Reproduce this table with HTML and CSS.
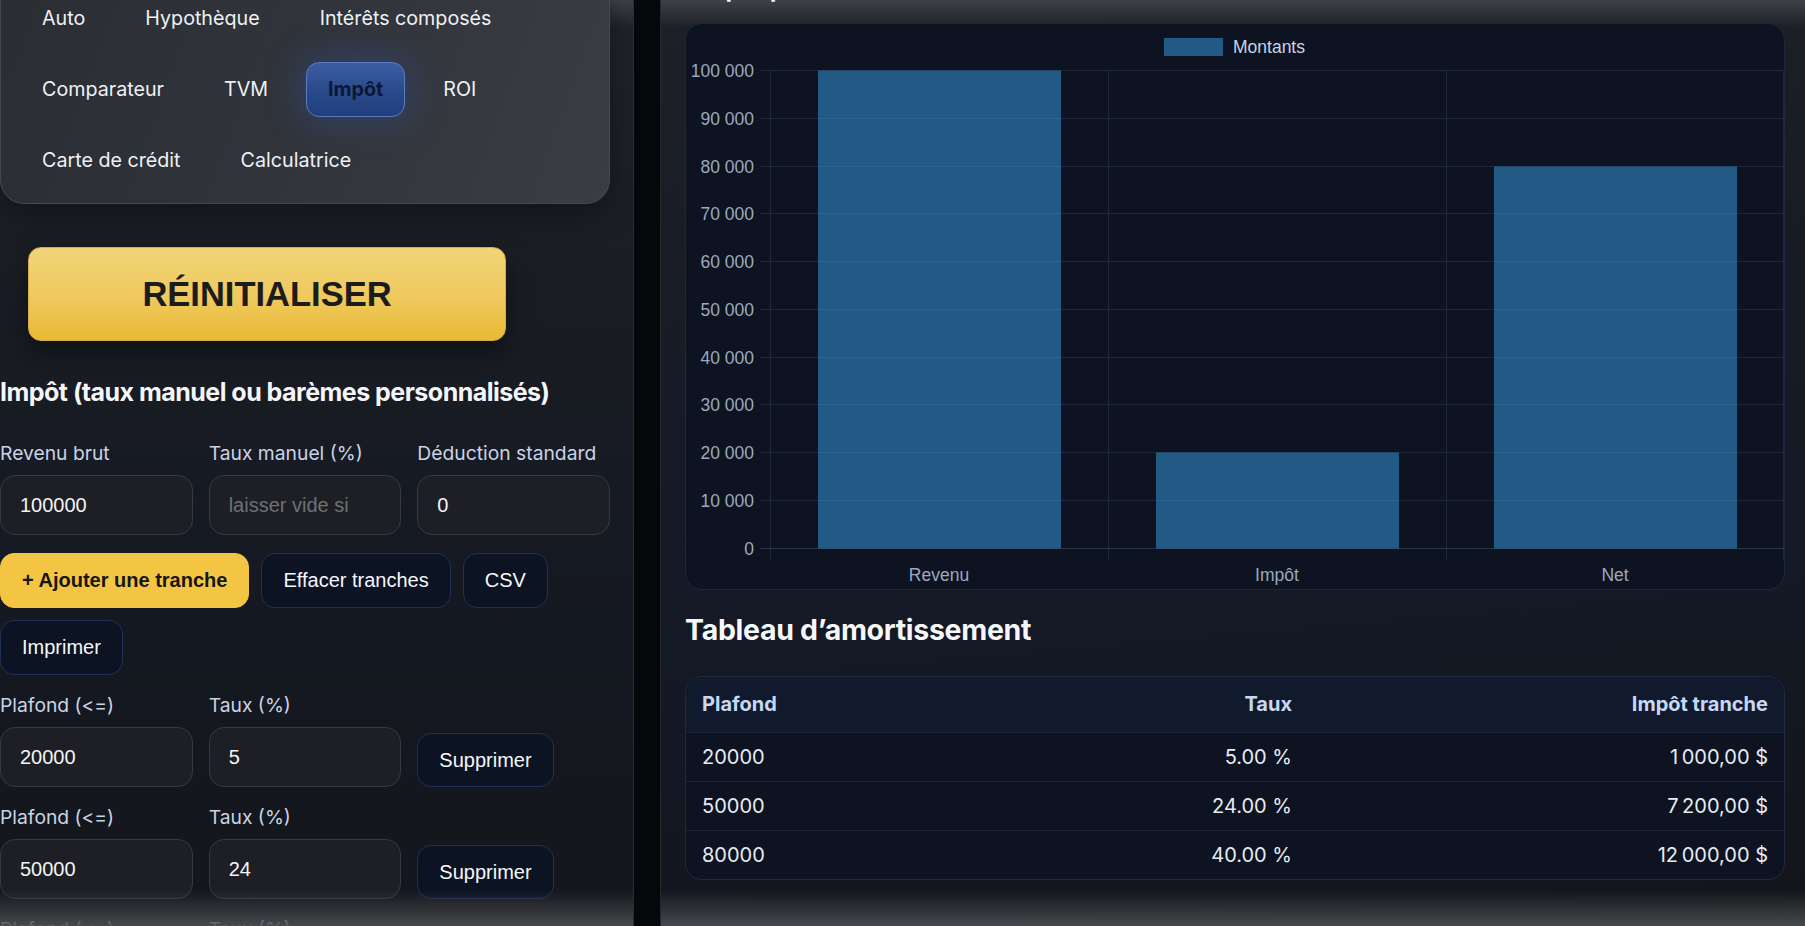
FILE: index.html
```html
<!DOCTYPE html>
<html lang="fr">
<head>
<meta charset="utf-8">
<title>Impôt</title>
<link rel="stylesheet" href="styles.css">
</head>
<body>
<div class="app">
  <aside class="panel panel-left">
    <div class="sidebar">
      <nav class="nav-card">
        <button class="nav-btn">Auto</button>
        <button class="nav-btn">Hypothèque</button>
        <button class="nav-btn">Intérêts composés</button>
        <button class="nav-btn">Comparateur</button>
        <button class="nav-btn">TVM</button>
        <button class="nav-btn is-active">Impôt</button>
        <button class="nav-btn">ROI</button>
        <button class="nav-btn">Carte de crédit</button>
        <button class="nav-btn">Calculatrice</button>
      </nav>

      <button class="reset-btn">RÉINITIALISER</button>

      <section class="tax">
        <h2 class="tax-title">Impôt (taux manuel ou barèmes personnalisés)</h2>
        <div class="form-stack">
          <div class="field-grid">
            <label class="field"><span class="field-label">Revenu brut</span><input class="field-input" value="100000"></label>
            <label class="field"><span class="field-label">Taux manuel (%)</span><input class="field-input field-input--hint" placeholder="laisser vide si barèmes"></label>
            <label class="field"><span class="field-label">Déduction standard</span><input class="field-input" value="0"></label>
          </div>

          <div class="actions">
            <button class="btn btn-primary">+ Ajouter une tranche</button>
            <button class="btn">Effacer tranches</button>
            <button class="btn">CSV</button>
            <button class="btn">Imprimer</button>
          </div>

          <div class="field-grid">
            <label class="field"><span class="field-label">Plafond (&lt;=)</span><input class="field-input" value="20000"></label>
            <label class="field"><span class="field-label">Taux (%)</span><input class="field-input" value="5"></label>
            <button class="btn btn-remove">Supprimer</button>
          </div>
          <div class="field-grid">
            <label class="field"><span class="field-label">Plafond (&lt;=)</span><input class="field-input" value="50000"></label>
            <label class="field"><span class="field-label">Taux (%)</span><input class="field-input" value="24"></label>
            <button class="btn btn-remove">Supprimer</button>
          </div>
          <div class="field-grid">
            <label class="field"><span class="field-label">Plafond (&lt;=)</span><input class="field-input" value="80000"></label>
            <label class="field"><span class="field-label">Taux (%)</span><input class="field-input" value="40"></label>
            <button class="btn btn-remove">Supprimer</button>
          </div>
        </div>
      </section>
    </div>
  </aside>

  <main class="panel panel-right">
    <h2 class="section-title section-title--top">Graphique</h2>
    <div class="chart-card">
      <svg class="chart-svg" viewBox="0 0 1098 565" xmlns="http://www.w3.org/2000/svg">
        <g class="grid" stroke="#1f2839" stroke-width="1">
          <line x1="74" y1="46.5" x2="1098" y2="46.5"/>
          <line x1="74" y1="94.5" x2="1098" y2="94.5"/>
          <line x1="74" y1="142.5" x2="1098" y2="142.5"/>
          <line x1="74" y1="189.5" x2="1098" y2="189.5"/>
          <line x1="74" y1="237.5" x2="1098" y2="237.5"/>
          <line x1="74" y1="285.5" x2="1098" y2="285.5"/>
          <line x1="74" y1="333.5" x2="1098" y2="333.5"/>
          <line x1="74" y1="380.5" x2="1098" y2="380.5"/>
          <line x1="74" y1="428.5" x2="1098" y2="428.5"/>
          <line x1="74" y1="476.5" x2="1098" y2="476.5"/>
          <line x1="84.5" y1="46" x2="84.5" y2="536"/>
          <line x1="422.5" y1="46" x2="422.5" y2="536"/>
          <line x1="760.5" y1="46" x2="760.5" y2="536"/>
          <line x1="1097.5" y1="46" x2="1097.5" y2="536"/>
        </g>
        <line x1="74" y1="524.5" x2="1098" y2="524.5" stroke="#2a3449" stroke-width="1"/>
        <g fill="rgba(54,162,235,0.5)">
          <rect x="132" y="46.5" width="243" height="478"/>
          <rect x="470" y="428.5" width="243" height="96"/>
          <rect x="808" y="142.5" width="243" height="382"/>
        </g>
        <g class="ticks" font-family="Liberation Sans, Arial, sans-serif" font-size="17.5" fill="#9aa9be" text-anchor="end">
          <text x="68" y="53">100 000</text>
          <text x="68" y="101">90 000</text>
          <text x="68" y="149">80 000</text>
          <text x="68" y="196">70 000</text>
          <text x="68" y="244">60 000</text>
          <text x="68" y="292">50 000</text>
          <text x="68" y="340">40 000</text>
          <text x="68" y="387">30 000</text>
          <text x="68" y="435">20 000</text>
          <text x="68" y="483">10 000</text>
          <text x="68" y="531">0</text>
        </g>
        <g font-family="Liberation Sans, Arial, sans-serif" font-size="17.5" fill="#9aa9be" text-anchor="middle">
          <text x="253" y="557">Revenu</text>
          <text x="591" y="557">Impôt</text>
          <text x="929" y="557">Net</text>
        </g>
        <rect x="478" y="14" width="59" height="18" fill="rgba(54,162,235,0.5)"/>
        <text x="547" y="29" font-family="Liberation Sans, Arial, sans-serif" font-size="17.5" fill="#c8d4e6">Montants</text>
      </svg>
    </div>

    <h2 class="section-title">Tableau d’amortissement</h2>
    <div class="table-card">
      <table class="amort">
        <colgroup>
          <col class="col-plafond">
          <col class="col-taux">
          <col class="col-impot">
        </colgroup>
        <thead>
          <tr><th>Plafond</th><th class="num">Taux</th><th class="num">Impôt tranche</th></tr>
        </thead>
        <tbody>
          <tr><td>20000</td><td class="num">5.00 %</td><td class="num">1&#8239;000,00&nbsp;$</td></tr>
          <tr><td>50000</td><td class="num">24.00 %</td><td class="num">7&#8239;200,00&nbsp;$</td></tr>
          <tr><td>80000</td><td class="num">40.00 %</td><td class="num">12&#8239;000,00&nbsp;$</td></tr>
        </tbody>
      </table>
    </div>
  </main>
</div>
</body>
</html>
```

FILE: styles.css
```css
* { box-sizing: border-box; }

html, body {
  margin: 0;
  height: 926px;
  overflow: hidden;
}

body {
  background: #05070a;
  font-family: Inter, "Noto Sans", sans-serif;
  color: #e8edf5;
}

.app {
  display: flex;
  gap: 26px;
  height: 926px;
  overflow: hidden;
}

.panel {
  position: relative;
  height: 100%;
  overflow: hidden;
}

.panel > * {
  position: relative;
  z-index: 1;
}

.panel::before,
.panel::after {
  content: "";
  position: absolute;
  left: 0;
  right: 0;
  pointer-events: none;
}

.panel::before {
  top: 0;
  height: 28px;
  z-index: 0;
  background: linear-gradient(180deg, rgba(70, 73, 78, 0.8), rgba(70, 73, 78, 0));
}

.panel::after {
  bottom: 0;
  height: 36px;
  z-index: 5;
  background: linear-gradient(0deg, rgba(76, 78, 82, 0.9), rgba(76, 78, 82, 0));
}

.panel-left {
  width: 634px;
  flex: none;
  border-right: 1px solid #2a2d33;
  background: linear-gradient(180deg, #202328 0%, #1a1d23 30%, #151922 60%, #14161b 100%);
}

.panel-right {
  flex: 1;
  padding: 0 20px 0 24px;
  border-left: 1px solid #24272d;
  background: linear-gradient(175deg, #1d2026 0%, #171b25 40%, #141926 65%, #131519 100%);
}

/* ---------- left sidebar ---------- */

.sidebar {
  width: 610px;
}

.nav-card {
  margin-top: -26px;
  padding: 16px 19px 15px;
  display: flex;
  flex-wrap: wrap;
  gap: 16px;
  border: 1px solid #45484e;
  border-radius: 24px;
  background: linear-gradient(110deg, #2a2d32 0%, #31343a 50%, #3a3d43 100%);
  box-shadow: 0 10px 30px rgba(0, 0, 0, 0.35);
}

.nav-btn {
  height: 55px;
  padding: 0 21px;
  border: 1px solid transparent;
  border-radius: 13px;
  background: transparent;
  color: #eef1f6;
  font-family: Inter, "Noto Sans", sans-serif;
  font-size: 19.7px;
  line-height: 25px;
  white-space: nowrap;
}

.nav-btn.is-active {
  background: linear-gradient(180deg, #3b5da2 0%, #2a4989 55%, #213f7c 100%);
  border-color: #5a7cc4;
  color: #0c1833;
  font-weight: 700;
  box-shadow: 0 0 32px 10px rgba(50, 90, 190, 0.25);
}

.reset-btn {
  display: block;
  margin: 43px 0 0 28px;
  width: 478px;
  height: 94px;
  border: 1px solid #d6ab48;
  border-radius: 13px;
  background: linear-gradient(180deg, #f0d57a 0%, #efc95c 55%, #e8b934 100%);
  color: #1c1c1c;
  font-family: "Liberation Sans", Arial, sans-serif;
  font-weight: 700;
  font-size: 34.5px;
  box-shadow: 0 10px 28px rgba(0, 0, 0, 0.45);
}

.tax-title {
  margin: 36px 0 0;
  font-size: 25px;
  line-height: 30px;
  font-weight: 700;
  color: #f4f6fa;
  letter-spacing: -0.52px;
  white-space: nowrap;
}

.form-stack {
  margin-top: 34px;
  display: flex;
  flex-direction: column;
  gap: 18px;
}

.field-grid {
  display: grid;
  grid-template-columns: repeat(3, 1fr);
  column-gap: 16px;
  align-items: end;
}

.field {
  display: flex;
  flex-direction: column;
  min-width: 0;
}

.field-label {
  font-size: 19.3px;
  line-height: 24px;
  margin-bottom: 10px;
  color: #c9d3e6;
  white-space: nowrap;
}

.field-input {
  width: 100%;
  height: 60px;
  padding: 0 19px;
  border: 1px solid #363940;
  border-radius: 15px;
  background: #1d1f24;
  color: #f3f4f6;
  font-family: "Liberation Sans", Arial, sans-serif;
  font-size: 20px;
  outline: none;
}

.field-input--hint {
  padding-right: 46px;
}

.field-input::placeholder {
  color: #6e7176;
}

.actions {
  display: flex;
  flex-wrap: wrap;
  gap: 12px;
}

.btn {
  height: 55px;
  padding: 0 21px;
  border: 1px solid #1f3256;
  border-radius: 14px;
  background: #0c1322;
  color: #f5f7fb;
  font-family: "Liberation Sans", Arial, sans-serif;
  font-size: 20px;
  white-space: nowrap;
}

.btn-primary {
  background: #f4c542;
  border-color: #f4c542;
  color: #161616;
  font-weight: 700;
}

.btn-remove {
  height: 54px;
  justify-self: start;
}

/* ---------- right content ---------- */

.section-title {
  margin: 23px 0 30px;
  font-size: 28.5px;
  line-height: 33px;
  font-weight: 700;
  color: #f5f7fb;
  letter-spacing: -0.3px;
}

.section-title--top {
  margin: -28px 0 18px;
  font-size: 24px;
}

.chart-card {
  height: 567px;
  border: 1px solid #1c2740;
  border-radius: 17px;
  background: #0e1321;
  overflow: hidden;
}

.chart-svg {
  display: block;
  width: 1098px;
  height: 565px;
}

.table-card {
  border: 1px solid #1e2a42;
  border-radius: 17px;
  overflow: hidden;
  background: #0d1320;
}

.amort {
  width: 100%;
  border-collapse: collapse;
  table-layout: fixed;
  font-size: 20px;
}

.col-plafond { width: 30%; }
.col-taux { width: 26.65%; }
.col-impot { width: 43.35%; }

.amort th {
  height: 55px;
  padding: 0 16px;
  font-weight: 700;
  color: #c7d8f3;
  background: #111a2c;
  text-align: left;
}

.amort td {
  height: 49px;
  padding: 0 16px;
  color: #e6ebf3;
  border-top: 1px solid #1a2339;
}

.amort .num {
  text-align: right;
}
```
